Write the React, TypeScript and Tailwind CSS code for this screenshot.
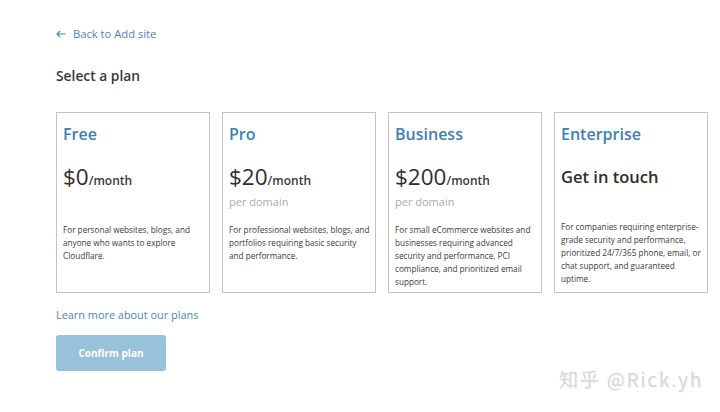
const plans = [
  {
    name: "Free",
    price: "$0",
    unit: "/month",
    per: "",
    desc: "For personal websites, blogs, and anyone who wants to explore Cloudflare.",
  },
  {
    name: "Pro",
    price: "$20",
    unit: "/month",
    per: "per domain",
    desc: "For professional websites, blogs, and portfolios requiring basic security and performance.",
  },
  {
    name: "Business",
    price: "$200",
    unit: "/month",
    per: "per domain",
    desc: "For small eCommerce websites and businesses requiring advanced security and performance, PCI compliance, and prioritized email support.",
  },
  {
    name: "Enterprise",
    price: "",
    unit: "",
    per: "",
    desc: "For companies requiring enterprise-grade security and performance, prioritized 24/7/365 phone, email, or chat support, and guaranteed uptime.",
  },
];

export default function App() {
  return (
    <div className="relative w-[720px] h-[412px] bg-white overflow-hidden font-['Open_Sans',sans-serif] text-[#333]">
      <div className="flex flex-col pl-[56px] pr-[12px] pt-[26px]">
        <a className="flex items-center gap-[7px] text-[11.2px] text-[#4a86b4] leading-[16px]">
          <svg width="10" height="8" viewBox="0 0 10 8" fill="none" stroke="#4a86b4" strokeWidth="1.1">
            <path d="M9.5 4H1M4 1L1 4l3 3" />
          </svg>
          <span>Back to Add site</span>
        </a>

        <h2 className="mt-[24px] text-[13.8px] font-semibold text-[#3a3a3a] leading-[20px]">Select a plan</h2>

        <div className="mt-[26px] grid grid-cols-4 gap-[12px] w-[652px]">
          {plans.map((p) => (
            <div key={p.name} className="h-[181px] border border-[#c4c4c4] pl-[6px] pr-[3px] pt-[9px] flex flex-col">
              <div className="text-[16px] font-semibold text-[#3d80b5] leading-[24px]">{p.name}</div>
              {p.price ? (
                <div className="mt-[17px] flex items-baseline leading-[28px]">
                  <span className="text-[22.5px] font-medium text-[#2e2e2e]">{p.price}</span>
                  <span className="text-[12px] font-semibold text-[#3a3a3a]">{p.unit}</span>
                </div>
              ) : (
                <div className="mt-[17px] text-[16.5px] font-semibold text-[#2e2e2e] leading-[28px]">Get in touch</div>
              )}
              <div className="h-[20px] text-[11px] text-[#ababab] leading-[14px]">{p.per}</div>
              <p
                className={
                  p.name === "Enterprise"
                    ? "mt-[9px] text-[8.2px] leading-[13px] text-[#3a3a3a]"
                    : "mt-[8px] text-[8.2px] leading-[13px] text-[#3a3a3a]"
                }
              >
                {p.desc}
              </p>
            </div>
          ))}
        </div>

        <a className="mt-[14px] text-[10.9px] text-[#4a86b4] leading-[16px]">Learn more about our plans</a>

        <button className="mt-[12px] w-[110px] h-[36px] rounded-[3px] bg-[#98c2da] text-white text-[10px] font-bold">
          Confirm plan
        </button>
      </div>

      <div className="absolute left-[559px] top-[365px] text-[19px] text-[#d8d8d8] tracking-[1.8px] font-['Noto_Sans_CJK_SC',sans-serif] [text-shadow:1px_1px_0_#f3f3f3]">
        知乎 @Rick.yh
      </div>
    </div>
  );
}
